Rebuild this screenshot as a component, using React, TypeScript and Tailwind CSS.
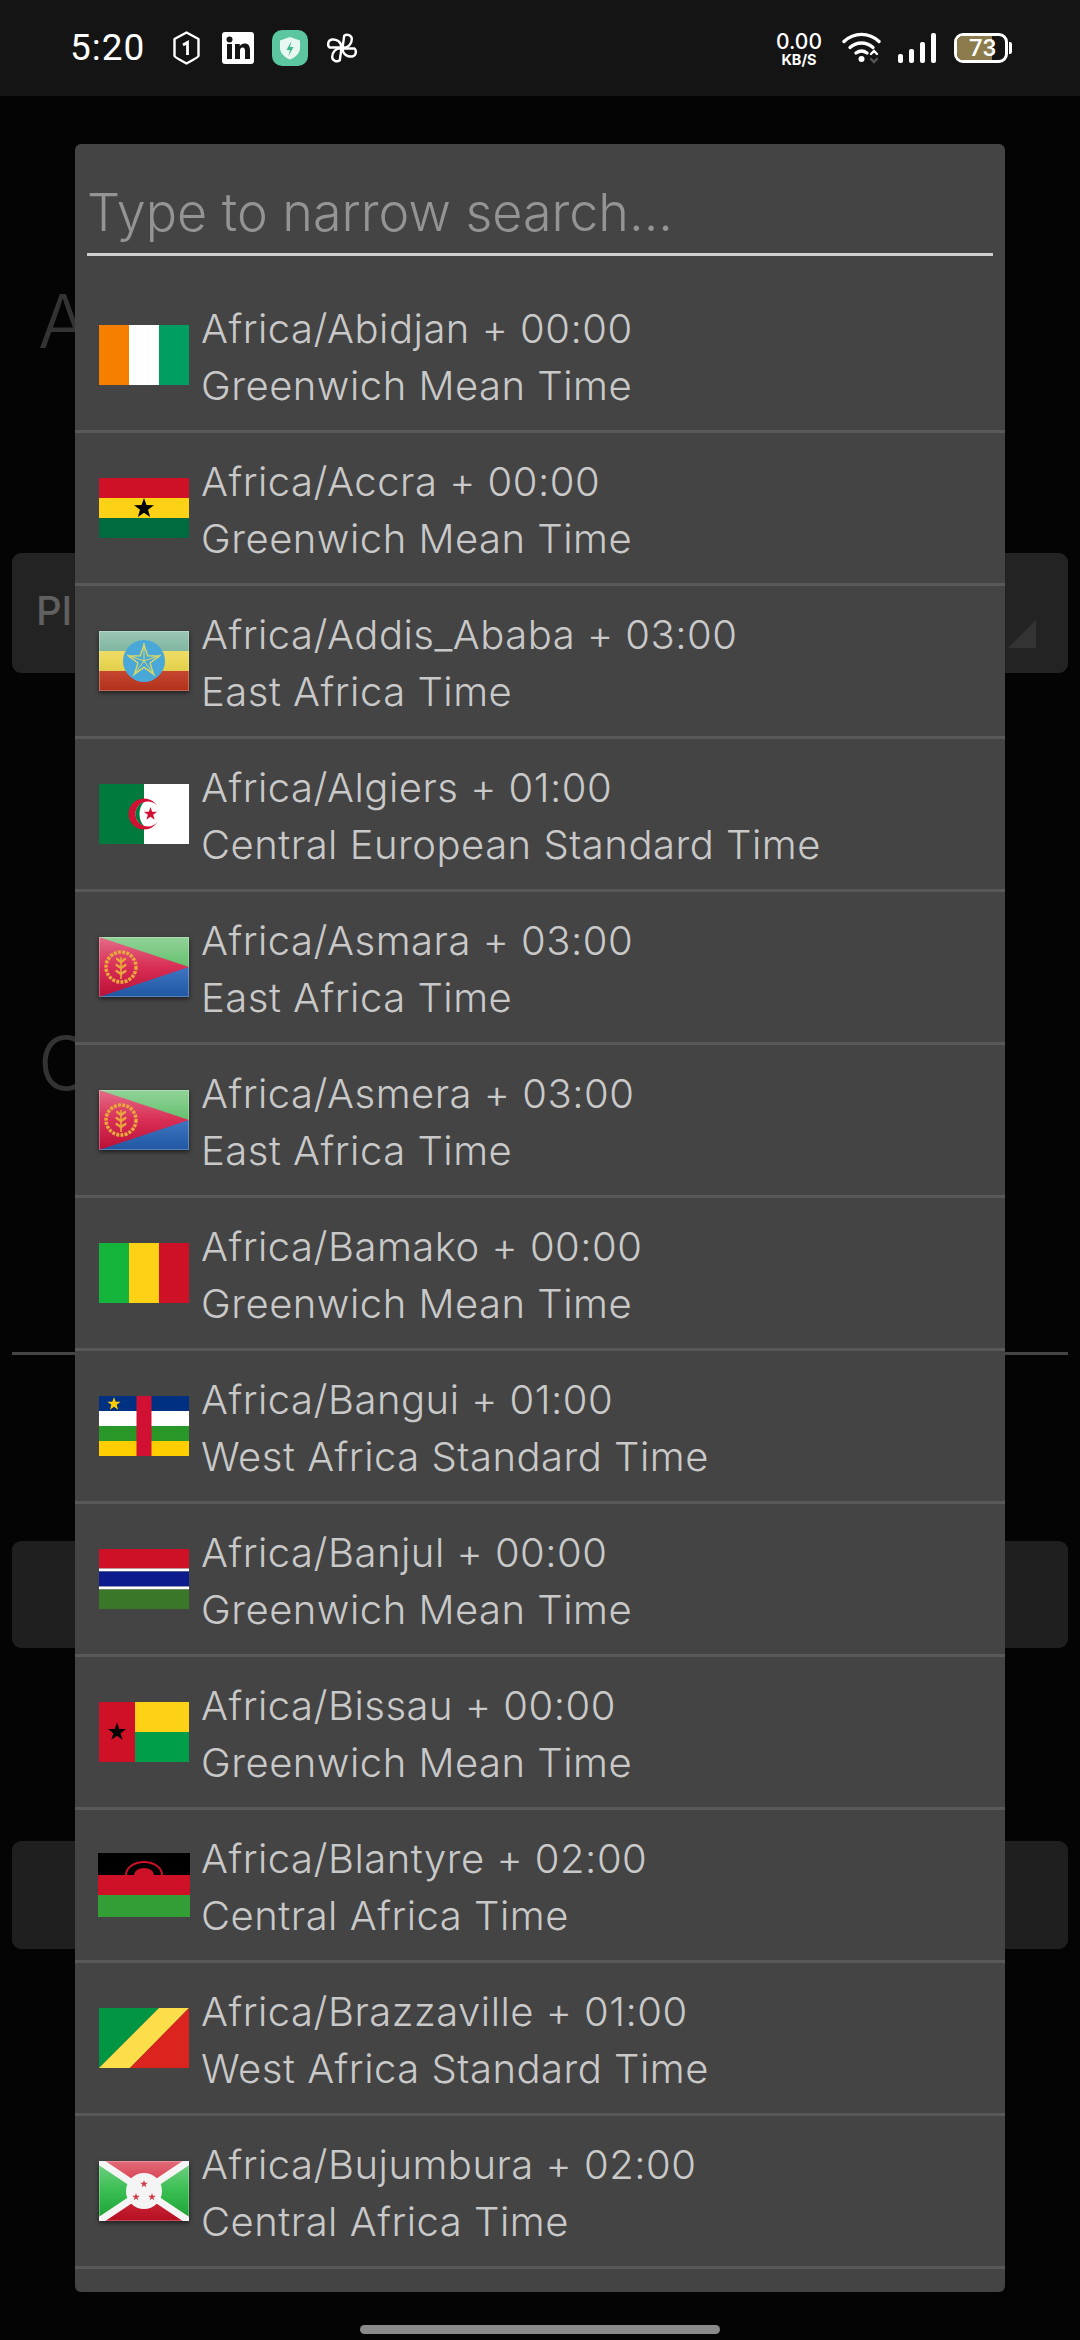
import React from "react";

function starPts(cx: number, cy: number, r: number) {
  const p: string[] = [];
  for (let i = 0; i < 10; i++) {
    const a = -Math.PI / 2 + (i * Math.PI) / 5;
    const rr = i % 2 === 0 ? r : r * 0.4;
    p.push(`${(cx + rr * Math.cos(a)).toFixed(2)},${(cy + rr * Math.sin(a)).toFixed(2)}`);
  }
  return p.join(" ");
}

function Box({ children, glossy }: { children: React.ReactNode; glossy?: boolean }) {
  return (
    <svg viewBox="0 0 90 60" className={glossy ? "block w-[90px] h-[60px] drop-shadow-[0_2px_2px_rgba(0,0,0,0.55)]" : "block w-[90px] h-[60px]"}>
      {children}
    </svg>
  );
}

function Gloss() {
  return (
    <>
      <defs>
        <linearGradient id="gloss" x1="0" y1="0" x2="0" y2="1">
          <stop offset="0" stopColor="#fff" stopOpacity="0.38" />
          <stop offset="0.5" stopColor="#fff" stopOpacity="0.12" />
          <stop offset="1" stopColor="#000" stopOpacity="0.12" />
        </linearGradient>
      </defs>
      <rect x="0" y="0" width="90" height="60" fill="url(#gloss)" />
      <rect x="0.5" y="0.5" width="89" height="59" fill="none" stroke="#fff" strokeOpacity="0.25" />
    </>
  );
}

const Ivory = () => (
  <Box>
    <rect width="30" height="60" fill="#f77f00" />
    <rect x="30" width="30" height="60" fill="#fff" />
    <rect x="60" width="30" height="60" fill="#009e60" />
  </Box>
);
const Ghana = () => (
  <Box>
    <rect width="90" height="20" fill="#ce1126" />
    <rect y="20" width="90" height="20" fill="#fcd116" />
    <rect y="40" width="90" height="20" fill="#006b3f" />
    <polygon points={starPts(45, 30.5, 10.5)} fill="#000" />
  </Box>
);
const Ethiopia = () => (
  <Box glossy>
    <rect width="90" height="20" fill="#5fa488" />
    <rect y="20" width="90" height="20" fill="#e8d23f" />
    <rect y="40" width="90" height="20" fill="#c9381f" />
    <Gloss />
    <circle cx="45" cy="30" r="21" fill="#4aa8d8" />
    <polygon points={starPts(45, 30, 16)} fill="none" stroke="#d8d86a" strokeWidth="1.4" />
    <g stroke="#d8d86a" strokeWidth="1">
      <line x1="45" y1="30" x2="45" y2="12" />
      <line x1="45" y1="30" x2="62" y2="24" />
      <line x1="45" y1="30" x2="28" y2="24" />
      <line x1="45" y1="30" x2="56" y2="45" />
      <line x1="45" y1="30" x2="34" y2="45" />
    </g>
  </Box>
);
const Algeria = () => (
  <Box>
    <rect width="45" height="60" fill="#007a3d" />
    <rect x="45" width="45" height="60" fill="#fff" />
    <circle cx="45" cy="30" r="15.5" fill="#d21034" />
    <circle cx="49" cy="30" r="12.5" fill="#fff" />
    <path d="M45 18.100a12.500 12.500 0 0 0 0 23.800c-3-3-4.500-7-4.500-11.900s1.500-8.900 4.500-11.900z" fill="#007a3d" />
    <polygon points={starPts(51.500, 30, 7)} fill="#d21034" />
  </Box>
);
const Eritrea = () => (
  <Box glossy>
    <rect width="90" height="30" fill="#4fb85a" />
    <rect y="30" width="90" height="30" fill="#2563b8" />
    <polygon points="0,0 90,30 0,60" fill="#d3123e" />
    <Gloss />
    <circle cx="22" cy="30" r="15" fill="none" stroke="#e8a93c" strokeWidth="3.5" strokeDasharray="3 1.2" />
    <line x1="22" y1="20" x2="22" y2="42" stroke="#e8a93c" strokeWidth="1.6" />
    <g stroke="#e8a93c" strokeWidth="2.2" strokeLinecap="round">
      <line x1="22" y1="25" x2="26" y2="22" />
      <line x1="22" y1="25" x2="18" y2="22" />
      <line x1="22" y1="31" x2="26.5" y2="28" />
      <line x1="22" y1="31" x2="17.5" y2="28" />
      <line x1="22" y1="37" x2="26.5" y2="34" />
      <line x1="22" y1="37" x2="17.5" y2="34" />
    </g>
  </Box>
);
const Mali = () => (
  <Box>
    <rect width="30" height="60" fill="#14b53a" />
    <rect x="30" width="30" height="60" fill="#fcd116" />
    <rect x="60" width="30" height="60" fill="#ce1126" />
  </Box>
);
const CAR = () => (
  <Box>
    <rect width="90" height="15" fill="#003082" />
    <rect y="15" width="90" height="15" fill="#fff" />
    <rect y="30" width="90" height="15" fill="#289728" />
    <rect y="45" width="90" height="15" fill="#ffce00" />
    <rect x="37.5" width="15" height="60" fill="#d21034" />
    <polygon points={starPts(15, 8, 7)} fill="#ffce00" />
  </Box>
);
const Gambia = () => (
  <Box>
    <rect width="90" height="19.5" fill="#ce1126" />
    <rect y="19.5" width="90" height="3" fill="#fff" />
    <rect y="22.5" width="90" height="15" fill="#0c1c8c" />
    <rect y="37.5" width="90" height="3" fill="#fff" />
    <rect y="40.5" width="90" height="19.5" fill="#3a7728" />
  </Box>
);
const Bissau = () => (
  <Box>
    <rect width="36" height="60" fill="#ce1126" />
    <rect x="36" width="54" height="30" fill="#fcd116" />
    <rect x="36" y="30" width="54" height="30" fill="#009e49" />
    <polygon points={starPts(18, 30, 9.5)} fill="#000" />
  </Box>
);
const Malawi = () => (
  <svg viewBox="0 0 92 64" className="block w-[92px] h-[64px] -my-[2px] -mx-[1px]">
    <rect width="92" height="22" fill="#000" />
    <rect y="22" width="92" height="20" fill="#ce1126" />
    <rect y="42" width="92" height="22" fill="#339e35" />
    <path d="M36 22a10 7 0 0 1 20 0z" fill="#ce1126" />
    <path d="M28 22a18 13 0 0 1 36 0" fill="none" stroke="#ce1126" strokeWidth="2" />
  </svg>
);
const Congo = () => (
  <Box>
    <polygon points="0,0 60,0 0,60" fill="#009543" />
    <polygon points="60,0 90,0 31,60 0,60" fill="#fbde4a" />
    <polygon points="90,0 90,60 31,60" fill="#dc241f" />
  </Box>
);
const Burundi = () => (
  <Box glossy>
    <rect width="90" height="60" fill="#1eb53a" />
    <polygon points="0,0 90,0 45,30" fill="#ce1126" />
    <polygon points="0,60 90,60 45,30" fill="#ce1126" />
    <Gloss />
    <line x1="0" y1="0" x2="90" y2="60" stroke="#f4f4f4" strokeWidth="7" />
    <line x1="90" y1="0" x2="0" y2="60" stroke="#f4f4f4" strokeWidth="7" />
    <circle cx="45" cy="30" r="18" fill="#f4f4f4" />
    <polygon points={starPts(45, 23, 4)} fill="#ce3a4a" />
    <polygon points={starPts(37, 36, 4)} fill="#ce3a4a" />
    <polygon points={starPts(53, 36, 4)} fill="#ce3a4a" />
  </Box>
);

const rows: { name: string; zone: string; Flag: () => React.ReactElement }[] = [
  { name: "Africa/Abidjan + 00:00", zone: "Greenwich Mean Time", Flag: Ivory },
  { name: "Africa/Accra + 00:00", zone: "Greenwich Mean Time", Flag: Ghana },
  { name: "Africa/Addis_Ababa + 03:00", zone: "East Africa Time", Flag: Ethiopia },
  { name: "Africa/Algiers + 01:00", zone: "Central European Standard Time", Flag: Algeria },
  { name: "Africa/Asmara + 03:00", zone: "East Africa Time", Flag: Eritrea },
  { name: "Africa/Asmera + 03:00", zone: "East Africa Time", Flag: Eritrea },
  { name: "Africa/Bamako + 00:00", zone: "Greenwich Mean Time", Flag: Mali },
  { name: "Africa/Bangui + 01:00", zone: "West Africa Standard Time", Flag: CAR },
  { name: "Africa/Banjul + 00:00", zone: "Greenwich Mean Time", Flag: Gambia },
  { name: "Africa/Bissau + 00:00", zone: "Greenwich Mean Time", Flag: Bissau },
  { name: "Africa/Blantyre + 02:00", zone: "Central Africa Time", Flag: Malawi },
  { name: "Africa/Brazzaville + 01:00", zone: "West Africa Standard Time", Flag: Congo },
  { name: "Africa/Bujumbura + 02:00", zone: "Central Africa Time", Flag: Burundi },
];

function StatusBar() {
  return (
    <div className="h-[96px] bg-[#141414] flex items-start justify-between pl-[70px] pr-[68px] text-white font-['Inter',sans-serif]">
      <div className="flex items-center h-[96px] pb-[1px]">
        <span className="text-[37px] font-normal leading-none w-[103px] font-['Roboto',sans-serif] tracking-[1px]">5:20</span>
        <svg viewBox="0 0 27 34" className="w-[27px] h-[34px]">
          <path d="M13.5 1.5 25.5 8v17q0 1-12 7.500Q1.5 26 1.5 25V8z" fill="none" stroke="#fff" strokeWidth="2.4" strokeLinejoin="round" />
          <path d="M10 14l4.500-2.500V24" fill="none" stroke="#fff" strokeWidth="2.8" />
        </svg>
        <svg viewBox="0 0 32 32" className="w-[32px] h-[32px] ml-[22px]">
          <rect width="32" height="32" rx="3" fill="#fff" />
          <rect x="5" y="12" width="5" height="15" fill="#141414" />
          <circle cx="7.5" cy="7.5" r="3" fill="#141414" />
          <path d="M13 12h4.800v2.200c1-1.600 2.600-2.600 4.800-2.600 4 0 5.400 2.600 5.400 6.600V27h-5v-8c0-2-.6-3.400-2.300-3.400-2 0-2.700 1.500-2.700 3.400v8h-5z" fill="#141414" />
        </svg>
        <svg viewBox="0 0 36 36" className="w-[36px] h-[36px] ml-[18px]">
          <rect width="36" height="36" rx="10" fill="#5cc6a0" />
          <path d="M18 7l10 3.500V18c0 5.500-5 9.500-10 11.500C13 27.500 8 23.500 8 18v-7.500z" fill="#e8f7f1" />
          <path d="M19.500 11l-5 9h3.500l-1.500 6 5-9h-3.500z" fill="#3fb98c" />
        </svg>
        <svg viewBox="0 0 32 32" className="w-[32px] h-[32px] ml-[18px]" fill="none" stroke="#fff" strokeWidth="2.4" strokeLinejoin="round">
          <path d="M15.500 15.500H3.500C1 13 2 8 6 7.500c4-.5 9.500 2 9.500 8z" />
          <path d="M16.500 15.500V3.500C19 1 24 2 24.500 6c.5 4-2 9.500-8 9.500z" transform="rotate(8 16 16)" />
          <path d="M16.500 16.500h12c2.500 2.500 1.500 7.500-2.500 8-4 .5-9.500-2-9.500-8z" />
          <path d="M15.500 16.500v12c-2.500 2.500-7.500 1.500-8-2.500-.5-4 2-9.500 8-9.500z" transform="rotate(8 16 16)" />
        </svg>
      </div>
      <div className="flex items-center h-[96px]">
        <div className="w-[52px] flex flex-col items-center text-white mt-[2px]">
          <span className="text-[21px] font-medium leading-[21px]">0.00</span>
          <span className="text-[14.5px] font-bold leading-[15px]">KB/S</span>
        </div>
        <svg viewBox="0 0 40 32" className="w-[40px] h-[32px] ml-[17px]" fill="none" stroke="#fff" strokeLinecap="round">
          <path d="M2 9.500C12 0 27 0 37 9.500" strokeWidth="3.400" />
          <path d="M8 15.500c7-6 16-6 23 0" strokeWidth="3.400" />
          <path d="M14 21c4-3 7-3 11 0" strokeWidth="3.400" />
          <circle cx="19.500" cy="27" r="3" fill="#fff" stroke="none" />
          <path d="M29 22l3-3 3 3" strokeWidth="2.400" />
          <path d="M29 27l3 3 3-3" strokeWidth="2.400" stroke="#555" />
        </svg>
        <div className="flex items-end gap-[6px] h-[30px] ml-[16px]">
          <div className="w-[5px] h-[9px] rounded-[2px] bg-white" />
          <div className="w-[5px] h-[14px] rounded-[2px] bg-white" />
          <div className="w-[5px] h-[21px] rounded-[2px] bg-white" />
          <div className="w-[5px] h-[30px] rounded-[2px] bg-white" />
        </div>
        <div className="relative ml-[18px] w-[54px] h-[30px] rounded-[9px] border-[3px] border-white overflow-hidden flex items-center">
          <div className="w-[35px] h-full bg-[#8c7c4b]" />
          <span className="absolute left-[12px] top-[-1px] text-[24px] leading-[27px] font-medium font-['Roboto',sans-serif]">73</span>
        </div>
        <div className="w-[3px] h-[12px] bg-white rounded-r-[2px] ml-[1px]" />
      </div>
    </div>
  );
}

export default function App() {
  return (
    <div className="relative w-[1080px] h-[2340px] bg-[#040404] overflow-hidden font-['Inter',sans-serif] font-light">
      <StatusBar />

      {/* page behind the dialog */}
      <div className="flex flex-col px-[12px] pt-[180px]">
        <div className="pl-[26px] h-[277px] text-[74px] leading-[90px] text-[#333333]">A</div>
        <div className="h-[120px] rounded-[9px] bg-[#232323] flex items-center justify-between pl-[24px] pr-[30px] pb-[4px]">
          <span className="text-[40px] font-medium text-[#606060]">Pl</span>
          <svg viewBox="0 0 32 32" className="w-[32px] h-[32px] mt-[46px]">
            <polygon points="30,2 30,30 2,30" fill="#343434" />
          </svg>
        </div>
        <div className="pl-[26px] mt-[345px] h-[334px] text-[74px] leading-[90px] text-[#333333]">C</div>
        <div className="h-[3px] bg-[#444444]" />
        <div className="h-[107px] mt-[186px] rounded-[9px] bg-[#1f1f1f]" />
        <div className="h-[108px] mt-[193px] rounded-[9px] bg-[#1f1f1f]" />
      </div>

      {/* dialog */}
      <div className="absolute left-[75px] top-[144px] w-[930px] h-[2148px] bg-[#444444] rounded-[6px] overflow-hidden flex flex-col">
        <div className="mx-[12px] h-[112px] border-b-[3px] border-[#cfcfcf] flex items-end pb-[8px] text-[52px] leading-[64px] text-[#949494]">
          Type to narrow search...
        </div>
        <div className="mt-[24px] flex flex-col">
          {rows.map((r) => (
            <div key={r.name} className="h-[153px] shrink-0 border-b-[3px] border-[#585858] flex items-center pl-[24px]">
              <div className="w-[90px] shrink-0">
                <r.Flag />
              </div>
              <div className="ml-[12px] pt-[3px] text-[40px] leading-[57px] tracking-[0.5px] text-[#c9c9c9] whitespace-nowrap">
                <div>{r.name}</div>
                <div>{r.zone}</div>
              </div>
            </div>
          ))}
        </div>
      </div>

      {/* gesture bar */}
      <div className="absolute left-[360px] top-[2325px] w-[360px] h-[9px] rounded-full bg-[#8a8a8a]" />
    </div>
  );
}
